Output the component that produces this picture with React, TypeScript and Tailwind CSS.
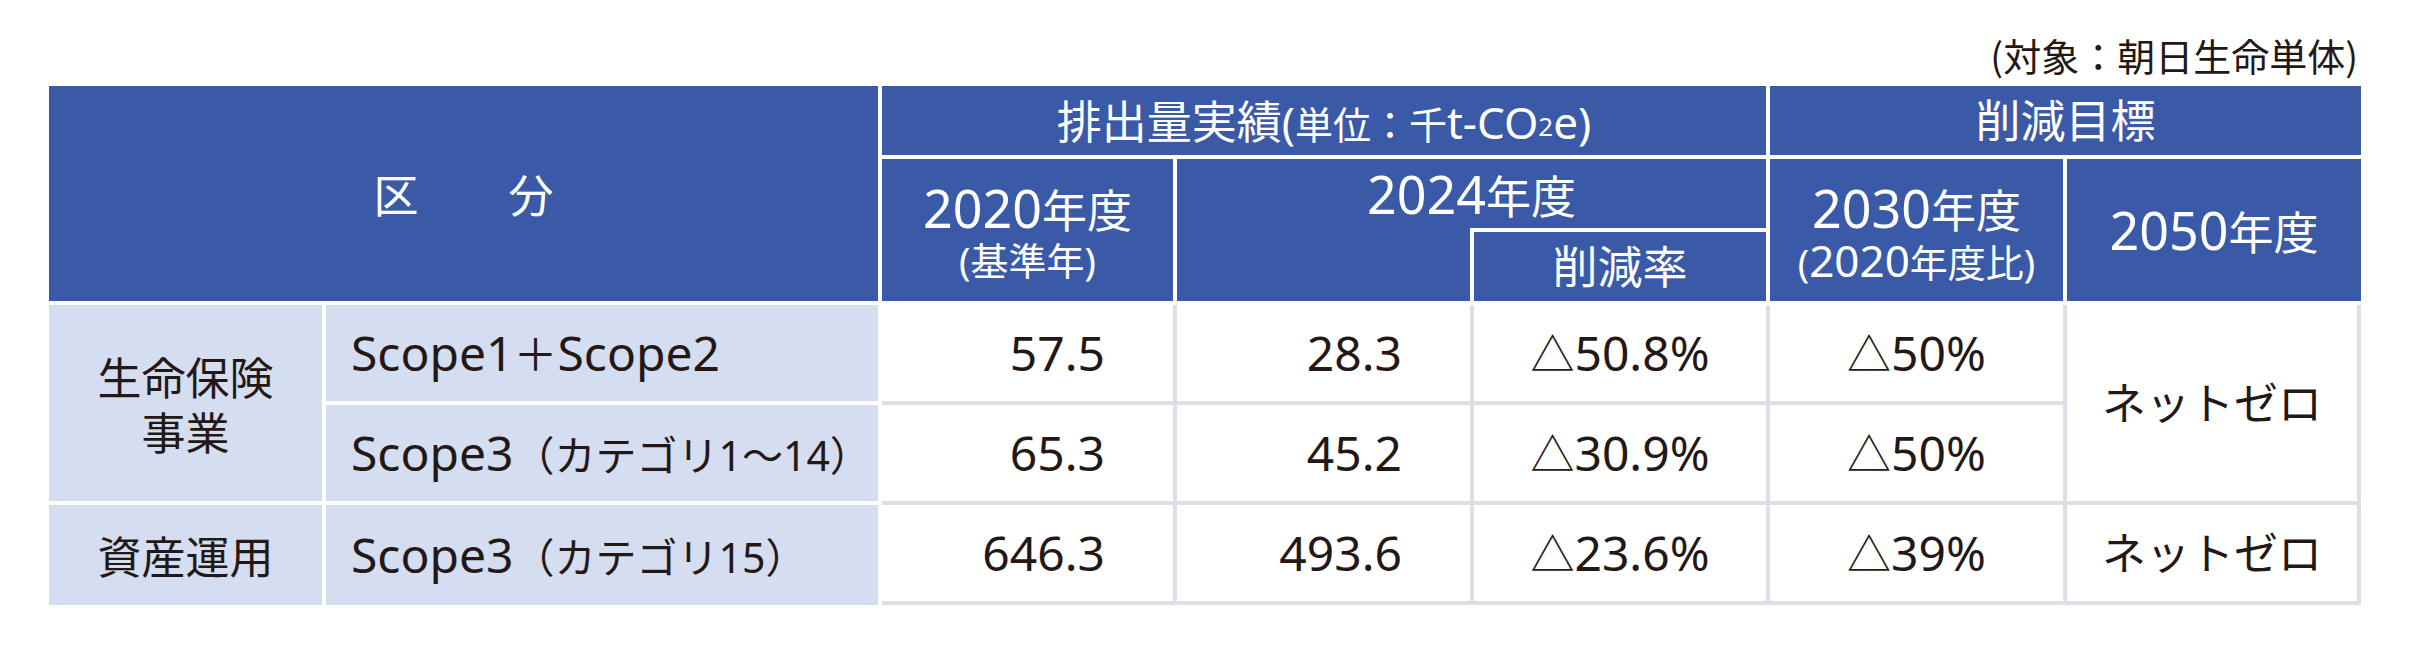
import React from "react";

const BLUE = "bg-[#3a5aa8]";

function HeadTwoLine({ year, sub }: { year: React.ReactNode; sub: React.ReactNode }) {
  return (
    <div className={`${BLUE} row-span-2 flex flex-col items-center justify-center pt-[8px]`}>
      <div className="h-[52px] flex items-center justify-center whitespace-nowrap">
        <span className="leading-none">{year}</span>
      </div>
      <div className="h-[52px] flex items-center justify-center whitespace-nowrap">
        <span className="leading-none">{sub}</span>
      </div>
    </div>
  );
}

function Year({ n, big = "text-[52px]", jp = "text-[45px]" }: { n: string; big?: string; jp?: string }) {
  return (
    <>
      <span className={big}>{n}</span>
      <span className={jp}>年度</span>
    </>
  );
}

function Num({ v }: { v: string }) {
  return <div className="bg-white flex items-center justify-end pr-[68px] text-[48px]">{v}</div>;
}

function Pct({ v, span = "" }: { v: string; span?: string }) {
  return (
    <div className={`bg-white flex items-center justify-center text-[48px] ${span}`}>
      <span>
        <span className="text-[44px]">△</span>
        {v}
      </span>
    </div>
  );
}

function Zero({ span = "" }: { span?: string }) {
  return <div className={`bg-white flex items-center justify-center text-[44px] ${span}`}>ネットゼロ</div>;
}

export default function App() {
  return (
    <div className="w-[2419px] h-[652px] bg-white pl-[49px] font-['Noto_Sans','Noto_Sans_CJK_JP',sans-serif] text-[#231815] leading-none">
      <div className="w-[2312px]">
        <div className="h-[86px] flex items-end justify-end pb-[12px] pr-[3px] text-[38px] font-['Noto_Sans_CJK_JP',sans-serif]">
          (対象：朝日生命単体)
        </div>

        {/* header */}
        <div className="grid grid-cols-[273px_552px_291px_293px_292px_293px_294px] grid-rows-[69px_69px_69px] gap-[4px] text-white">
          <div className={`${BLUE} col-span-2 row-span-3 flex items-center justify-center text-[45px] font-['Noto_Sans_CJK_JP',sans-serif]`}>
            区　　分
          </div>
          <div className={`${BLUE} col-span-3 flex items-center justify-center whitespace-nowrap`}>
            <span>
              <span className="text-[45px] font-['Noto_Sans_CJK_JP',sans-serif]">排出量実績</span>
              <span className="text-[44px]">(</span>
              <span className="text-[38px] font-['Noto_Sans_CJK_JP',sans-serif]">単位：千</span>
              <span className="text-[44px]">t-CO</span>
              <span className="text-[26px] align-[3px]">2</span>
              <span className="text-[44px]">e)</span>
            </span>
          </div>
          <div className={`${BLUE} col-span-2 flex items-center justify-center text-[45px]`}>削減目標</div>

          <HeadTwoLine
            year={<Year n="2020" />}
            sub={<span className="text-[38px]">(基準年)</span>}
          />

          <div className={`${BLUE} col-span-2 row-span-2 flex flex-col`}>
            <div className="h-[69px] flex items-center justify-center">
              <span>
                <Year n="2024" />
              </span>
            </div>
            <div className="flex flex-1">
              <div className="w-[293px]" />
              <div className="flex-1 border-l-4 border-t-4 border-white flex items-center justify-center text-[45px]">
                削減率
              </div>
            </div>
          </div>

          <HeadTwoLine
            year={<Year n="2030" />}
            sub={
              <span className="text-[38px]">
                (<span className="text-[44px]">2020</span>年度比)
              </span>
            }
          />

          <div className={`${BLUE} row-span-2 flex items-center justify-center`}>
            <span>
              <Year n="2050" />
            </span>
          </div>
        </div>

        {/* body */}
        <div className="mt-[4px] flex gap-[4px]">
          <div className="grid grid-cols-[273px_552px] grid-rows-[96px_96px_100px] gap-[4px]">
            <div className="row-span-2 bg-[#d5ddf0] flex flex-col items-center justify-center text-[44px] font-['Noto_Sans_CJK_JP',sans-serif]">
              <span className="h-[55px] flex items-center">生命保険</span>
              <span className="h-[55px] flex items-center">事業</span>
            </div>
            <div className="bg-[#d5ddf0] flex items-center pl-[25px] text-[48px] whitespace-nowrap">
              <span>
                Scope1<span className="text-[44px]">＋</span>Scope2
              </span>
            </div>
            <div className="bg-[#d5ddf0] flex items-center pl-[25px] text-[48px] whitespace-nowrap">
              <span>
                Scope3<span className="text-[41px]">（カテゴリ1～14）</span>
              </span>
            </div>
            <div className="bg-[#d5ddf0] flex items-center justify-center text-[44px] font-['Noto_Sans_CJK_JP',sans-serif]">
              資産運用
            </div>
            <div className="bg-[#d5ddf0] flex items-center pl-[25px] text-[48px] whitespace-nowrap">
              <span>
                Scope3<span className="text-[41px]">（カテゴリ15）</span>
              </span>
            </div>
          </div>

          <div className="grid grid-cols-[291px_293px_292px_293px_290px] grid-rows-[96px_96px_96px] gap-[4px] bg-[#dcdfe6] border-r-4 border-b-4 border-[#dcdfe6]">
            <Num v="57.5" />
            <Num v="28.3" />
            <Pct v="50.8%" />
            <Pct v="50%" />
            <Zero span="row-span-2" />
            <Num v="65.3" />
            <Num v="45.2" />
            <Pct v="30.9%" />
            <Pct v="50%" />
            <Num v="646.3" />
            <Num v="493.6" />
            <Pct v="23.6%" />
            <Pct v="39%" />
            <Zero />
          </div>
        </div>
      </div>
    </div>
  );
}
